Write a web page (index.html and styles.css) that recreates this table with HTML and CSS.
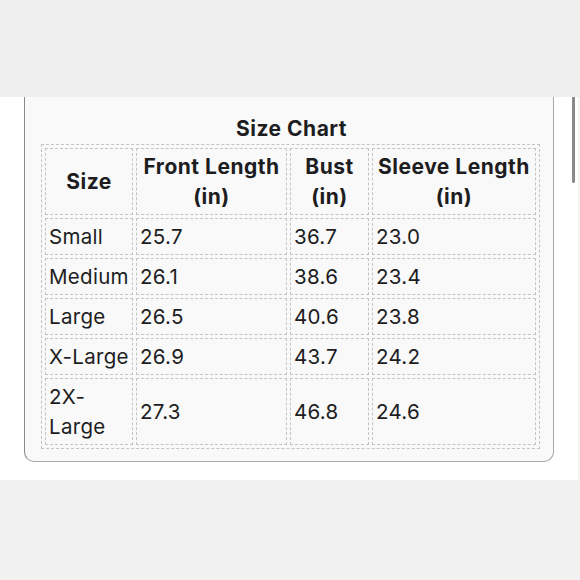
FILE: index.html
```html
<!DOCTYPE html>
<html lang="en">
<head>
<meta charset="utf-8">
<title>Size Chart</title>
<link rel="stylesheet" href="styles.css">
</head>
<body>
<div class="top-band"></div>
<div class="sheet">
  <div class="card">
    <table class="chart">
      <caption>Size Chart</caption>
      <colgroup>
        <col class="c1"><col class="c2"><col class="c3"><col class="c4">
      </colgroup>
      <thead>
        <tr><th>Size</th><th>Front Length<br>(in)</th><th>Bust<br>(in)</th><th>Sleeve Length<br>(in)</th></tr>
      </thead>
      <tbody>
        <tr><td>Small</td><td>25.7</td><td>36.7</td><td>23.0</td></tr>
        <tr><td>Medium</td><td>26.1</td><td>38.6</td><td>23.4</td></tr>
        <tr><td>Large</td><td>26.5</td><td>40.6</td><td>23.8</td></tr>
        <tr><td>X-Large</td><td>26.9</td><td>43.7</td><td>24.2</td></tr>
        <tr><td>2X-<br>Large</td><td>27.3</td><td>46.8</td><td>24.6</td></tr>
      </tbody>
    </table>
  </div>
  <div class="scrollbar"></div>
</div>
<div class="bottom-band"></div>
</body>
</html>
```
FILE: styles.css
```css
html, body {
  margin: 0;
  padding: 0;
  height: 100%;
  background: #f0f0f0;
  font-family: "Inter", "Noto Sans", sans-serif;
  color: #1d1d1f;
}
.top-band {
  height: 97px;
  background: #efefef;
}
.sheet {
  position: relative;
  background: #ffffff;
  padding: 0 24px 18px 24px;
  border-right: 2px solid #f4f4f4;
}
.card {
  background: #f9f9f9;
  border: 1px solid #a8a8a8;
  border-left-color: #8a8a8a;
  border-top: none;
  border-radius: 0 0 10px 10px;
  padding: 17px 16px 12px 16px;
}
.chart {
  table-layout: fixed;
  width: 498px;
  border: 1px dashed #c4c4c4;
  border-spacing: 3px;
  font-size: 20.5px;
  line-height: 30px;
}
.chart caption {
  font-weight: 700;
  font-size: 21px;
  letter-spacing: 0.5px;
  line-height: 30px;
  text-align: center;
  color: #1d1d1f;
  padding-left: 2px;
}
.c1 { width: 88px; }
.c2 { width: 151px; }
.c3 { width: 79px; }
.c4 { width: 164px; }
.chart th, .chart td {
  border: 1px dashed #c4c4c4;
  padding: 2.5px 3px;
  vertical-align: middle;
}
.chart th {
  font-weight: 700;
  font-size: 21px;
  letter-spacing: 0.5px;
  text-align: center;
  color: #1d1d1f;
}
.chart td {
  font-weight: 400;
  letter-spacing: 0.3px;
  text-align: left;
  color: #1d1d1f;
  white-space: nowrap;
}
.scrollbar {
  position: absolute;
  top: 0;
  left: 572px;
  width: 3px;
  height: 86px;
  border-radius: 0 0 2px 2px;
  background: #8a8a8a;
}
.bottom-band {
  height: 100px;
  background: #f1f1f1;
}
```
